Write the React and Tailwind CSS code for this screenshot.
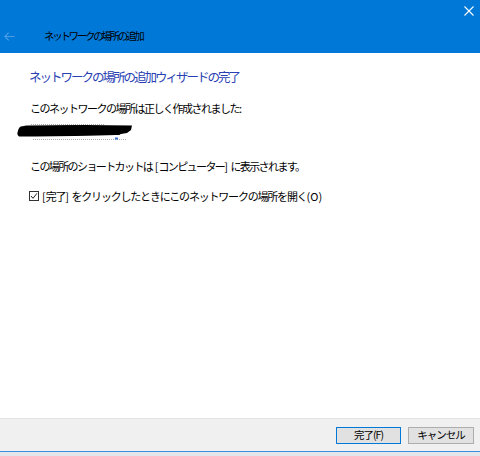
import React from "react";

const jp = { fontFamily: '"Noto Sans CJK JP", "Noto Sans", sans-serif' };

function A({ children }) {
  return <span className="tracking-[0px]">{children}</span>;
}

export default function App() {
  return (
    <div className="w-[480px] h-[456px] flex flex-col bg-white overflow-hidden" style={jp}>
      {/* Header */}
      <div className="h-[53px] bg-[#0078d7] flex flex-col shrink-0">
        <div className="h-[24px] flex justify-end items-start pt-[6px] pr-[5px]">
          <svg width="10" height="10" viewBox="0 0 10 10" className="mr-[1px]">
            <path d="M0.5 0.5 L9.5 9.5 M9.5 0.5 L0.5 9.5" stroke="#ffffff" strokeWidth="1.1" />
          </svg>
        </div>
        <div className="flex items-center h-[24px]">
          <div className="w-[44px] pl-[4px] flex items-center">
            <svg width="11" height="9" viewBox="0 0 11 9">
              <path d="M0.8 4.5 H10.5 M4.6 0.6 L0.8 4.5 L4.6 8.4" stroke="#4d9ee6" strokeWidth="1.1" fill="none" />
            </svg>
          </div>
          <span className="text-[10.5px] tracking-[-2.3px] text-[#000000] leading-none">ネットワークの場所の追加</span>
        </div>
      </div>

      {/* Body */}
      <div className="flex-1 flex flex-col pl-[29px] pt-[16px]">
        <div className="text-[12.5px] tracking-[-2px] text-[#2a3fb3] leading-[16px]">ネットワークの場所の追加ウィザードの完了</div>
        <div className="mt-[16px] pl-[1px] text-[11px] tracking-[-1.5px] text-[#000000] leading-[14px]">このネットワークの場所は正しく作成されました:</div>
        <div className="mt-[6px] -ml-[14px] h-[22px]">
          <svg width="120" height="22" viewBox="0 0 120 22">
            <path d="M16 3.5 H90" stroke="#8c8c8c" strokeWidth="0.7" strokeDasharray="1 1" />
            <path d="M18 18.5 H112" stroke="#8c8c8c" strokeWidth="0.7" strokeDasharray="1 1" />
            <path d="M3 10 C3 7 6 5 12 4.5 L70 4 L117 4.5 L116 9 L112 12 L100 14 L60 15 L20 15.5 L4 15.5 C2 14 2 12 3 10 Z" fill="#000" />
            <path d="M6 7 L60 6 M8 13 L104 12.5" stroke="#000" strokeWidth="3" strokeLinecap="round" />
            <rect x="100" y="16.5" width="3" height="2" fill="#3a6fd0" />
          </svg>
        </div>
        <div className="mt-[16px] pl-[1px] text-[11px] tracking-[-1.6px] text-[#000000] leading-[14px]">この場所のショートカットは<A> [</A>コンピューター<A>] </A>に表示されます。</div>
        <div className="mt-[16px] flex items-center">
          <div className="w-[10px] h-[10px] border border-[#333333] flex items-center justify-center bg-white">
            <svg width="8" height="8" viewBox="0 0 8 8">
              <path d="M1 4 L3 6.3 L7 1.3" stroke="#222" strokeWidth="1" fill="none" />
            </svg>
          </div>
          <span className="ml-[3px] text-[11px] tracking-[-1.2px] text-[#000000] leading-[14px]"><A>[</A>完了<A>] </A>をクリックしたときにこのネットワークの場所を開く<A>(O)</A></span>
        </div>
      </div>

      {/* Footer */}
      <div className="h-[33px] shrink-0 bg-[#f0f0f0] border-t border-[#e3e3e3] flex items-center justify-end pr-[6px] gap-[7px]">
        <button className="w-[65px] h-[17px] border border-[#0078d7] bg-[#e1e1e1] text-[10.5px] tracking-[-1px] text-black leading-none flex items-center justify-center" style={jp}>完了(F)</button>
        <button className="w-[66px] h-[17px] border border-[#adadad] bg-[#e1e1e1] text-[10.5px] tracking-[-1px] text-black leading-none flex items-center justify-center" style={jp}>キャンセル</button>
      </div>
      <div className="h-[1px] bg-[#3b8fe0] shrink-0"></div>
      <div className="h-[4px] bg-[#e2e6ea] shrink-0"></div>
    </div>
  );
}
